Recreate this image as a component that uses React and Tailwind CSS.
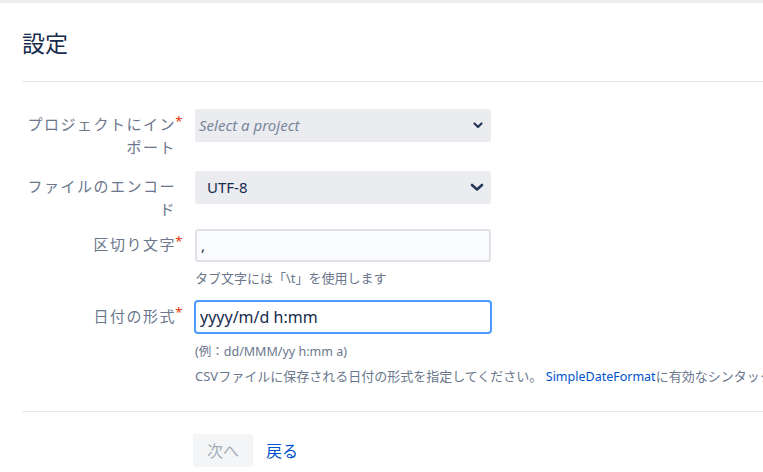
const FONT = "font-['Noto_Sans','Noto_Sans_CJK_JP',sans-serif]";

function Label({ text, required = true, pt = "pt-[4px]" }) {
  return (
    <div
      className={`relative w-[163px] shrink-0 pr-[9px] ${pt} text-right text-[15px] leading-[23px] tracking-[1.5px] text-[#6b778c]`}
    >
      {text}
      {required && (
        <span className="absolute right-[1px] top-[6px] text-[13px] leading-none text-[#de350b]">*</span>
      )}
    </div>
  );
}

function Chevron({ small }) {
  return small ? (
    <svg width="10" height="7" viewBox="0 0 10 7" className="shrink-0">
      <path d="M1.5 1.5 L5 5 L8.5 1.5" fill="none" stroke="#253858" strokeWidth="2.2" strokeLinecap="round" strokeLinejoin="round" />
    </svg>
  ) : (
    <svg width="14" height="9" viewBox="0 0 14 9" className="shrink-0">
      <path d="M2 2 L7 6.5 L12 2" fill="none" stroke="#253858" strokeWidth="2.6" strokeLinecap="round" strokeLinejoin="round" />
    </svg>
  );
}

export default function App() {
  return (
    <div className={`min-h-screen w-full overflow-hidden bg-white ${FONT}`}>
      <div className="h-[3px] bg-[#ebecf0]" />
      <div className="pl-[22px]">
        <h1 className="pt-[25px] text-[23px] leading-[30px] text-[#172b4d]">設定</h1>
        <div className="mt-[23px] border-t border-[#e4e6ea]" />

        {/* project */}
        <div className="mt-[27px] flex items-start">
          <Label text="プロジェクトにインポート" />
          <div className="ml-[10px] flex h-[33px] w-[296px] items-center justify-between rounded-[3px] bg-[#ebecf0] pl-[4px] pr-[8px]">
            <span className="text-[15px] italic text-[#7a869a]">Select a project</span>
            <Chevron small />
          </div>
        </div>

        {/* encoding */}
        <div className="mt-[12px] flex items-start">
          <Label text="ファイルのエンコード" required={false} />
          <div className="ml-[10px] flex h-[33px] w-[296px] items-center justify-between rounded-[3px] bg-[#ebecf0] pl-[12px] pr-[7px]">
            <span className="text-[15px] text-[#172b4d]">UTF-8</span>
            <Chevron />
          </div>
        </div>

        {/* delimiter */}
        <div className="mt-[8px] flex items-start">
          <Label text="区切り文字" pt="pt-[4px]" />
          <div className="ml-[10px] w-[296px]">
            <div className="flex h-[33px] items-center rounded-[3px] border-2 border-[#dfe1e6] bg-[#fafbfc] pl-[4px] text-[15px] text-[#172b4d]">
              ,
            </div>
            <div className="mt-[6px] whitespace-nowrap text-[13px] leading-[20px] text-[#6b778c]">
              タブ文字には「\t」を使用します
            </div>
          </div>
        </div>

        {/* date format */}
        <div className="mt-[12px] flex items-start">
          <Label text="日付の形式" pt="pt-[5px]" />
          <div className="ml-[9px] w-[298px]">
            <div className="flex h-[34px] items-center rounded-[4px] border-2 border-[#4c9aff] bg-white pl-[4px] text-[16px] text-[#172b4d]">
              yyyy/m/d h:mm
            </div>
            <div className="ml-[1px] mt-[8px] whitespace-nowrap text-[12.5px] leading-[20px] text-[#6b778c]">
              (例：dd/MMM/yy h:mm a)
            </div>
            <div className="ml-[1px] mt-[4px] whitespace-nowrap text-[13px] leading-[20px] text-[#6b778c]">
              CSVファイルに保存される日付の形式を指定してください。{" "}
              <span className="text-[12.5px] text-[#0052cc]">SimpleDateFormat</span>
              に有効なシンタックスを使用してください。
            </div>
          </div>
        </div>

        <div className="mt-[24px] border-t border-[#e4e6ea]" />

        <div className="mt-[22px] flex items-center">
          <div className="w-[163px] shrink-0" />
          <button className="ml-[8px] h-[33px] rounded-[3px] bg-[#f4f5f7] px-[14px] text-[16px] text-[#a5adba]">
            次へ
          </button>
          <a className="ml-[13px] text-[16px] text-[#0052cc]">戻る</a>
        </div>
      </div>
    </div>
  );
}
